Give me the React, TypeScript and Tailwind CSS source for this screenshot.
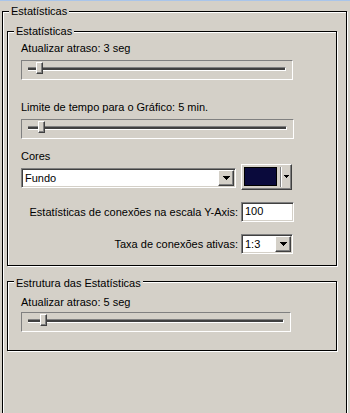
import React from "react";

const raised =
  "border border-t-white border-l-white border-r-[#404040] border-b-[#404040] shadow-[inset_-1px_-1px_0_#808080]";
const sunken =
  "border border-t-[#808080] border-l-[#808080] border-r-white border-b-white shadow-[inset_1px_1px_0_#404040,inset_-1px_-1px_0_#d4d0c8]";

const Arrow: React.FC<{ small?: boolean }> = ({ small }) =>
  small ? (
    <svg width="5" height="3" shapeRendering="crispEdges">
      <path d="M0 0h5v1H0zM1 1h3v1H1zM2 2h1v1H2z" fill="#000" />
    </svg>
  ) : (
    <svg width="7" height="4" shapeRendering="crispEdges">
      <path d="M0 0h7v1H0zM1 1h5v1H1zM2 2h3v1H2zM3 3h1v1H3z" fill="#000" />
    </svg>
  );

const Group: React.FC<{ label: string; className?: string; labelTop?: string; children?: React.ReactNode }> = ({
  label,
  className = "",
  labelTop = "-top-[7px]",
  children,
}) => (
  <div
    className={`relative shrink-0 border border-black shadow-[inset_1px_1px_0_#fff,1px_1px_0_#fff] ${className}`}
  >
    <span className={`absolute left-[6px] ${labelTop} bg-[#d4d0c8] px-[2px] leading-[13px]`}>
      {label}
    </span>
    {children}
  </div>
);

const Slider: React.FC<{ className: string; thumb: string }> = ({ className, thumb }) => (
  <div
    className={`relative h-[20px] border border-t-[#808080] border-l-[#808080] border-r-white border-b-white ${className}`}
  >
    <div className="mx-[6px] mt-[6px] h-[4px] border-t border-t-[#808080] border-b border-b-white border-r border-r-white bg-[#404040]" />
    <div className={`absolute top-[1px] w-[7px] h-[12px] bg-[#d4d0c8] ${raised} ${thumb}`} />
  </div>
);

const Combo: React.FC<{ value: string; className: string }> = ({ value, className }) => (
  <div className={`flex h-[20px] bg-white p-[1px] ${sunken} ${className}`}>
    <div className="flex-1 pl-[2px] leading-[16px]">{value}</div>
    <div className={`flex w-[16px] h-[16px] items-center justify-center bg-[#d4d0c8] ${raised}`}>
      <Arrow />
    </div>
  </div>
);

export default function App() {
  return (
    <div
      className="flex flex-col w-[350px] h-[413px] overflow-hidden bg-[#d4d0c8] text-[11px] leading-[13px] text-black"
      style={{ fontFamily: '"Liberation Sans", Arial, sans-serif' }}
    >
      <div className="h-[1px] shrink-0 bg-[#a9c5ea]" />
      <Group label="Estatísticas" className="ml-[2px] mt-[10px] w-[345px] h-[430px] pl-[4px] pt-[19px]">
        <Group label="Estatísticas" className="w-[330px] pb-[11px]">
          <div className="flex flex-col pl-[13px]">
            <div className="mt-[10px]">Atualizar atraso: 3 seg</div>
            <Slider className="mt-[5px] w-[272px]" thumb="left-[14px]" />
            <div className="mt-[21px]">Limite de tempo para o Gráfico: 5 min.</div>
            <Slider className="mt-[5px] w-[273px]" thumb="left-[16px]" />
            <div className="mt-[11px]">Cores</div>
            <div className="mt-[1px] flex items-start">
              <Combo value="Fundo" className="mt-[4px] w-[215px]" />
              <div className={`ml-[5px] flex h-[26px] w-[51px] items-start bg-[#d4d0c8] ${raised}`}>
                <div className="ml-[2px] mt-[2px] h-[19px] w-[33px] border border-black bg-[#0a0a3c]" />
                <div className="ml-[3px] mt-[2px] h-[20px] w-[2px] border-l border-l-[#808080] border-r border-r-white" />
                <div className="ml-[2px] mt-[10px] flex">
                  <Arrow small />
                </div>
              </div>
            </div>
            <div className="mt-[12px] flex items-center">
              <div className="w-[217px] text-right">Estatísticas de conexões na escala Y-Axis:</div>
              <div className={`ml-[3px] h-[20px] w-[53px] bg-white pl-[3px] leading-[16px] ${sunken}`}>100</div>
            </div>
            <div className="mt-[12px] flex items-center">
              <div className="w-[217px] text-right">Taxa de conexões ativas:</div>
              <Combo value="1:3" className="ml-[3px] w-[52px]" />
            </div>
          </div>
        </Group>
        <Group
          label="Estrutura das Estatísticas"
          labelTop="-top-[5px]"
          className="mt-[15px] w-[330px] pb-[18px]"
        >
          <div className="flex flex-col pl-[13px]">
            <div className="mt-[14px]">Atualizar atraso: 5 seg</div>
            <Slider className="mt-[3px] w-[270px]" thumb="left-[18px]" />
          </div>
        </Group>
      </Group>
    </div>
  );
}
